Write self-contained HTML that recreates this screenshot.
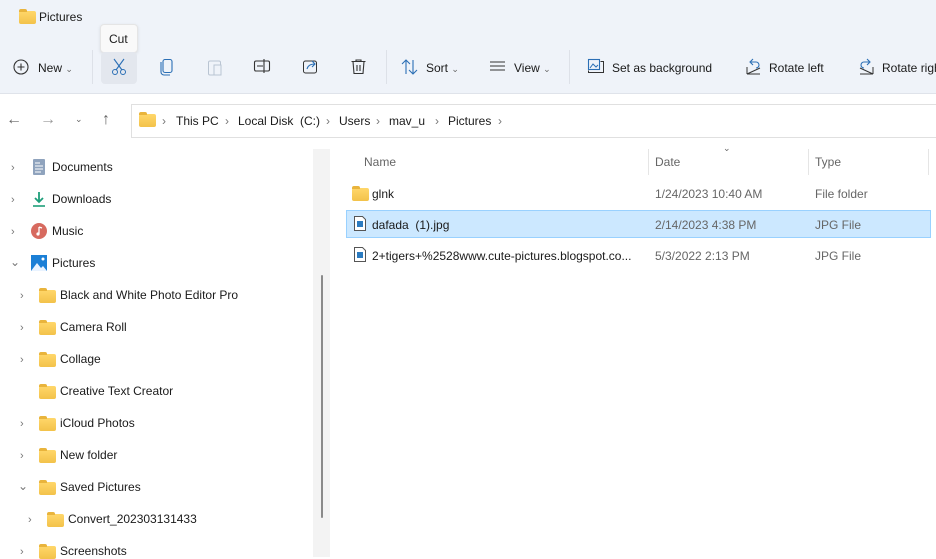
<!DOCTYPE html>
<html><head><meta charset="utf-8"><style>
*{margin:0;padding:0;box-sizing:border-box}
body{width:936px;height:557px;overflow:hidden;background:#fff;font-family:"Liberation Sans",sans-serif;font-size:12px;color:#1a1a1a;position:relative}
.a{position:absolute;white-space:nowrap}
.top{position:absolute;left:0;top:0;width:936px;height:94px;background:#eff3f9;border-bottom:1px solid #dfe3ea}
.sep{position:absolute;top:50px;width:1px;height:34px;background:#dde1e8}
.folder{position:absolute;width:17px;height:13px;background:linear-gradient(#ffd76a,#f3c24a);border-radius:2px}
.folder:before{content:"";position:absolute;left:0;top:-2px;width:8px;height:3px;background:#e9b43c;border-radius:2px 2px 0 0}
.chev{position:absolute;color:#777;font-size:11px}
.g{color:#666}
.bc{position:absolute;top:114px;white-space:nowrap}
.bs{position:absolute;top:114px;color:#777}
svg{position:absolute}
</style></head><body>
<div class="top"></div>
<div class="folder" style="left:19px;top:11px"></div>
<div class="a" style="left:39px;top:10px">Pictures</div>
<div class="a" style="left:100px;top:24px;width:38px;height:29px;background:#f9f9f9;border:1px solid #e5e5e5;border-radius:4px;box-shadow:0 1px 3px rgba(0,0,0,.1)"></div>
<div class="a" style="left:109px;top:32px">Cut</div>
<div class="a" style="left:101px;top:52px;width:36px;height:32px;background:#e3e7ee;border-radius:4px"></div>
<svg style="left:13px;top:59px" width="16" height="16" viewBox="0 0 16 16"><circle cx="8" cy="8" r="7" fill="none" stroke="#333" stroke-width="1.1"/><path d="M8 4.5v7M4.5 8h7" stroke="#333" stroke-width="1.1"/></svg>
<div class="a" style="left:38px;top:61px">New <span class="g" style="font-size:9px">⌄</span></div>
<div class="sep" style="left:92px"></div>
<svg style="left:110px;top:58px" width="18" height="18" viewBox="0 0 18 18"><path d="M4 1l8 11M14 1L6 12" stroke="#2b6fb5" stroke-width="1.1" fill="none"/><circle cx="5" cy="14" r="2.5" fill="none" stroke="#2b6fb5"/><circle cx="13" cy="14" r="2.5" fill="none" stroke="#2b6fb5"/></svg>
<svg style="left:159px;top:58px" width="16" height="18" viewBox="0 0 16 18"><rect x="4" y="1.5" width="9" height="13" rx="2" fill="none" stroke="#2b6fb5" stroke-width="1.1"/><path d="M2 4v10a3 3 0 0 0 3 3h6" fill="none" stroke="#2b6fb5" stroke-width="1.1"/></svg>
<svg style="left:207px;top:58px" width="16" height="18" viewBox="0 0 16 18"><rect x="1.5" y="3" width="12" height="14" rx="1.5" fill="none" stroke="#b9c4d2"/><rect x="7" y="7" width="7" height="10" fill="#eff3f9" stroke="#b9c4d2"/></svg>
<svg style="left:253px;top:58px" width="18" height="16" viewBox="0 0 18 16"><rect x="1.5" y="3" width="15" height="10" rx="1.5" fill="none" stroke="#333" stroke-width="1.1"/><path d="M4 8h6M11 1v14" stroke="#333" stroke-width="1.1"/></svg>
<svg style="left:302px;top:58px" width="17" height="17" viewBox="0 0 17 17"><rect x="1.5" y="3" width="13" height="12" rx="2" fill="none" stroke="#333"/><path d="M5 11c1-4 4-5 8-5M10 3l3 3-3 3" fill="none" stroke="#2b6fb5" stroke-width="1.1"/></svg>
<svg style="left:350px;top:58px" width="17" height="17" viewBox="0 0 17 17"><path d="M1.5 3.5h14M6 3.5V2h5v1.5M3 3.5l1 12h9l1-12M7 7v6M10 7v6" fill="none" stroke="#333" stroke-width="1.1"/></svg>
<div class="sep" style="left:386px"></div>
<svg style="left:401px;top:59px" width="17" height="16" viewBox="0 0 17 16"><path d="M5 15V1M1 5l4-4 4 4M12 1v14M8 11l4 4 4-4" fill="none" stroke="#2b6fb5" stroke-width="1.1"/></svg>
<div class="a" style="left:426px;top:61px">Sort <span class="g" style="font-size:9px">⌄</span></div>
<svg style="left:489px;top:60px" width="17" height="14" viewBox="0 0 17 14"><path d="M1 2h15M1 6h15M1 10h15" stroke="#333" stroke-width="1.1"/></svg>
<div class="a" style="left:514px;top:61px">View <span class="g" style="font-size:9px">⌄</span></div>
<div class="sep" style="left:569px"></div>
<svg style="left:587px;top:58px" width="18" height="16" viewBox="0 0 18 16"><rect x="1.5" y="1.5" width="11" height="10" fill="none" stroke="#2b6fb5" stroke-width="1.1"/><path d="M3 10l3-4 3 3 2-2" fill="none" stroke="#2b6fb5"/><path d="M1.5 12.5v2h15v-11h-3" fill="none" stroke="#333"/></svg>
<div class="a" style="left:612px;top:61px">Set as background</div>
<svg style="left:745px;top:58px" width="17" height="17" viewBox="0 0 17 17"><path d="M2 16l13-6M2 16h13M2 16V9" fill="none" stroke="#333"/><path d="M6 4h5a3 3 0 0 1 0 6M8 1L5 4l3 3" fill="none" stroke="#2b6fb5" stroke-width="1.1"/></svg>
<div class="a" style="left:769px;top:61px">Rotate left</div>
<svg style="left:858px;top:58px" width="17" height="17" viewBox="0 0 17 17"><path d="M15 16L2 10M15 16H2M15 16V9" fill="none" stroke="#333"/><path d="M11 4H6a3 3 0 0 0 0 6M9 1l3 3-3 3" fill="none" stroke="#2b6fb5" stroke-width="1.1"/></svg>
<div class="a" style="left:882px;top:61px">Rotate right</div>

<div class="a g" style="left:6px;top:111px;font-size:16px">←</div>
<div class="a" style="left:40px;top:111px;font-size:16px;color:#999">→</div>
<div class="a g" style="left:75px;top:114px;font-size:9px">⌄</div>
<div class="a g" style="left:102px;top:111px;font-size:16px">↑</div>
<div class="a" style="left:131px;top:104px;width:806px;height:34px;border:1px solid #e0e0e0;border-right:none"></div>
<div class="folder" style="left:139px;top:114px"></div>
<div class="bs" style="left:162px">›</div>
<div class="bc" style="left:176px">This PC</div>
<div class="bs" style="left:225px">›</div>
<div class="bc" style="left:238px">Local Disk &nbsp;(C:)</div>
<div class="bs" style="left:326px">›</div>
<div class="bc" style="left:339px">Users</div>
<div class="bs" style="left:376px">›</div>
<div class="bc" style="left:389px">mav_u</div>
<div class="bs" style="left:435px">›</div>
<div class="bc" style="left:448px">Pictures</div>
<div class="bs" style="left:498px">›</div>

<div class="a" style="left:313px;top:149px;width:17px;height:408px;background:#f3f3f3"></div>
<div class="a" style="left:321px;top:275px;width:2px;height:243px;background:#8a8a8a;border-radius:1px"></div>

<div class="chev" style="left:11px;top:162px">›</div>
<svg style="left:32px;top:159px" width="14" height="16"><rect x="1" y="0" width="12" height="16" rx="1" fill="#8fa3bd"/><path d="M3 4h5M3 7h8M3 10h8M3 13h6" stroke="#fff"/></svg>
<div class="a" style="left:52px;top:160px">Documents</div>
<div class="chev" style="left:11px;top:194px">›</div>
<svg style="left:32px;top:191px" width="14" height="16"><path d="M7 1v10M3 7l4 4 4-4" fill="none" stroke="#1e9e7a" stroke-width="1.8"/><path d="M1 15h12" stroke="#1e9e7a" stroke-width="1.6"/></svg>
<div class="a" style="left:52px;top:192px">Downloads</div>
<div class="chev" style="left:11px;top:226px">›</div>
<svg style="left:31px;top:223px" width="16" height="16"><circle cx="8" cy="8" r="8" fill="#d76a5f"/><path d="M8 4v7M8 4l3 1" stroke="#fff" stroke-width="1.3" fill="none"/><circle cx="7" cy="11" r="1.6" fill="#fff"/></svg>
<div class="a" style="left:52px;top:224px">Music</div>
<div class="chev" style="left:10px;top:255px;font-size:12px">⌄</div>
<svg style="left:31px;top:255px" width="16" height="16"><rect width="16" height="16" fill="#1b7fd6"/><path d="M0 16l6-8 4 5 2-2 4 5z" fill="#e9f3ff"/><circle cx="12" cy="4" r="1.5" fill="#fff"/></svg>
<div class="a" style="left:52px;top:256px">Pictures</div>

<div class="chev" style="left:20px;top:290px">›</div><div class="folder" style="left:39px;top:290px"></div><div class="a" style="left:60px;top:288px">Black and White Photo Editor Pro</div>
<div class="chev" style="left:20px;top:322px">›</div><div class="folder" style="left:39px;top:322px"></div><div class="a" style="left:60px;top:320px">Camera Roll</div>
<div class="chev" style="left:20px;top:354px">›</div><div class="folder" style="left:39px;top:354px"></div><div class="a" style="left:60px;top:352px">Collage</div>
<div class="folder" style="left:39px;top:386px"></div><div class="a" style="left:60px;top:384px">Creative Text Creator</div>
<div class="chev" style="left:20px;top:418px">›</div><div class="folder" style="left:39px;top:418px"></div><div class="a" style="left:60px;top:416px">iCloud Photos</div>
<div class="chev" style="left:20px;top:450px">›</div><div class="folder" style="left:39px;top:450px"></div><div class="a" style="left:60px;top:448px">New folder</div>
<div class="chev" style="left:18px;top:479px;font-size:12px">⌄</div><div class="folder" style="left:39px;top:482px"></div><div class="a" style="left:60px;top:480px">Saved Pictures</div>
<div class="chev" style="left:28px;top:514px">›</div><div class="folder" style="left:47px;top:514px"></div><div class="a" style="left:68px;top:512px">Convert_202303131433</div>
<div class="chev" style="left:20px;top:546px">›</div><div class="folder" style="left:39px;top:546px"></div><div class="a" style="left:60px;top:544px">Screenshots</div>

<div class="a g" style="left:364px;top:155px">Name</div>
<div class="a" style="left:648px;top:149px;width:1px;height:26px;background:#e5e5e5"></div>
<div class="a g" style="left:655px;top:155px">Date</div>
<div class="a g" style="left:723px;top:143px;font-size:9px">⌄</div>
<div class="a" style="left:808px;top:149px;width:1px;height:26px;background:#e5e5e5"></div>
<div class="a g" style="left:815px;top:155px">Type</div>
<div class="a" style="left:928px;top:149px;width:1px;height:26px;background:#e5e5e5"></div>

<div class="folder" style="left:352px;top:188px"></div>
<div class="a" style="left:372px;top:187px">glnk</div>
<div class="a g" style="left:655px;top:187px">1/24/2023 10:40 AM</div>
<div class="a g" style="left:815px;top:187px">File folder</div>

<div class="a" style="left:346px;top:210px;width:585px;height:28px;background:#cce8ff;border:1px solid #99d1ff"></div>
<svg style="left:354px;top:216px" width="12" height="15"><path d="M.5 .5h8l3 3v11H.5z" fill="#fff" stroke="#555"/><rect x="3" y="5" width="6" height="6" fill="#2b7bc0"/></svg>
<div class="a" style="left:372px;top:218px">dafada &nbsp;(1).jpg</div>
<div class="a g" style="left:655px;top:218px">2/14/2023 4:38 PM</div>
<div class="a g" style="left:815px;top:218px">JPG File</div>

<svg style="left:354px;top:247px" width="12" height="15"><path d="M.5 .5h8l3 3v11H.5z" fill="#fff" stroke="#555"/><rect x="3" y="5" width="6" height="6" fill="#2b7bc0"/></svg>
<div class="a" style="left:372px;top:249px">2+tigers+%2528www.cute-pictures.blogspot.co...</div>
<div class="a g" style="left:655px;top:249px">5/3/2022 2:13 PM</div>
<div class="a g" style="left:815px;top:249px">JPG File</div>
</body></html>
